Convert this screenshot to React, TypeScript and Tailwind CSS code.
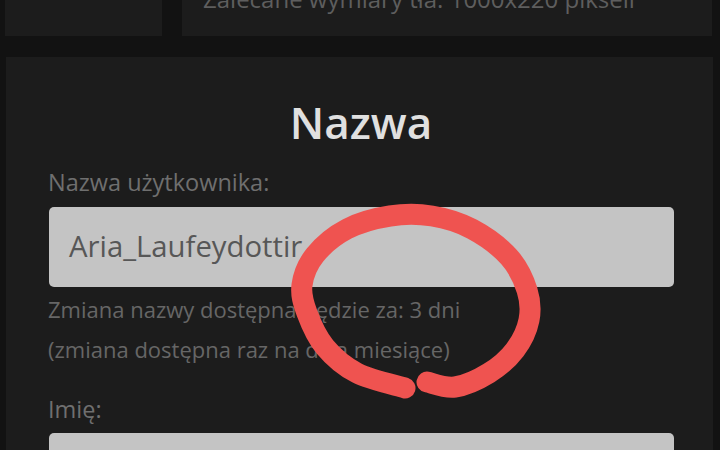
import React from "react";

const pts: [number, number][] = [
  [405, 388], [357, 373], [325, 347], [307, 313], [302, 285], [315, 255], [347, 229],
  [390, 216], [432, 216], [472, 229], [509, 257], [527, 290], [529, 320], [515, 350],
  [489, 373], [455, 387], [427, 382],
];

function smoothPath(p: [number, number][]) {
  let d = `M ${p[0][0]} ${p[0][1]}`;
  for (let i = 0; i < p.length - 1; i++) {
    const p0 = p[i - 1] || p[i];
    const p1 = p[i];
    const p2 = p[i + 1];
    const p3 = p[i + 2] || p2;
    const c1x = p1[0] + (p2[0] - p0[0]) / 6;
    const c1y = p1[1] + (p2[1] - p0[1]) / 6;
    const c2x = p2[0] - (p3[0] - p1[0]) / 6;
    const c2y = p2[1] - (p3[1] - p1[1]) / 6;
    d += ` C ${c1x} ${c1y} ${c2x} ${c2y} ${p2[0]} ${p2[1]}`;
  }
  return d;
}

export default function App() {
  const font = { fontFamily: '"Open Sans", "Noto Sans", sans-serif' };
  return (
    <div className="relative h-[450px] w-[720px] overflow-hidden bg-[#121212]" style={font}>
      <div className="-mt-[44px] flex h-[80px] gap-[20px] pl-[5px] pr-[8px]">
        <div className="w-[157px] bg-[#1c1c1c]" />
        <div className="flex-1 bg-[#1c1c1c] pl-[21px] pt-[28px]">
          <div className="text-[24px] leading-[30px] text-[#5e5e5e] whitespace-nowrap">
            Zalecane wymiary tła: 1000x220 pikseli
          </div>
        </div>
      </div>
      <div className="ml-[6px] mr-[7px] mt-[21px] h-[500px] bg-[#1c1c1c] pl-[42px] pr-[39px] pt-[34px]">
        <div className="text-center text-[44px] font-semibold leading-[62px] text-[#e0e0e0]">Nazwa</div>
        <div className="mt-[14px] text-[23.5px] leading-[30px] text-[#6f6f6f]">Nazwa użytkownika:</div>
        <div className="ml-[1px] mt-[10px] flex h-[80px] items-center rounded-[5px] bg-[#c4c4c4] pl-[20px]">
          <span className="text-[29.3px] text-[#575757]">Aria_Laufeydottir</span>
        </div>
        <div className="mt-[2px] text-[22px] leading-[40px] text-[#666666] whitespace-nowrap">
          <div>Zmiana nazwy dostępna będzie za: 3 dni</div>
          <div>(zmiana dostępna raz na dwa miesiące)</div>
        </div>
        <div className="mt-[25px] text-[23.5px] leading-[30px] text-[#6f6f6f]">Imię:</div>
        <div className="ml-[1px] mt-[9px] h-[80px] rounded-[5px] bg-[#c4c4c4]" />
      </div>
      <svg className="pointer-events-none absolute left-0 top-0" width="720" height="450">
        <path d={smoothPath(pts)} fill="none" stroke="#ef5350" strokeWidth="21" strokeLinecap="round" strokeLinejoin="round" />
      </svg>
    </div>
  );
}
